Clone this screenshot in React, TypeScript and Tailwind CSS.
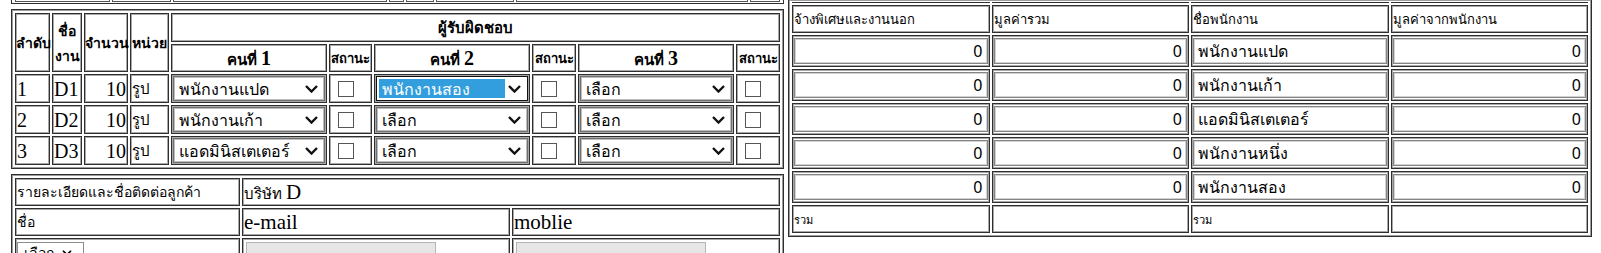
import { ChevronDown } from "lucide-react";

const td = "border border-[#2f2f2f] shadow-[inset_0_0_0_1px_#a8a8a8] p-px align-middle";
const th = "border border-[#2f2f2f] shadow-[inset_0_0_0_1px_#a8a8a8] p-0 align-middle font-bold leading-none";
const tbl =
  "border-separate border-spacing-[2px] border border-[#2f2f2f] p-px shadow-[inset_0_0_0_1px_#9c9c9c] table-fixed";
const sans = "font-['Noto_Sans','DejaVu_Sans',sans-serif]";
const serif = "font-['Liberation_Serif','Noto_Serif',serif]";

function Chevron() {
  return (
    <svg width="13" height="8" viewBox="0 0 13 8" className="shrink-0">
      <polyline points="1,1 6.5,6.5 12,1" fill="none" stroke="#111" strokeWidth="2.4" />
    </svg>
  );
}

function FakeSelect({ label, focused = false }: { label: string; focused?: boolean }) {
  return (
    <div
      className={`flex h-[25px] w-full items-center justify-between bg-white pr-[6px] ${sans} text-[16px] leading-none text-black ${
        focused
          ? "border border-[#111] pl-[2px]"
          : "border border-[#707070] pl-[5px] shadow-[inset_0_0_0_1px_#bdbdbd]"
      }`}
    >
      {focused ? (
        <span className="flex h-[19px] w-[126px] items-center bg-[#339ede] pl-[3px] text-white">{label}</span>
      ) : (
        <span>{label}</span>
      )}
      <Chevron />
    </div>
  );
}

function Check() {
  return <span className="ml-[7px] block h-[16px] w-[16px] border border-[#555] bg-white" />;
}

function NumInput({ value, left = false }: { value: string; left?: boolean }) {
  return (
    <input
      readOnly
      value={value}
      className={`block h-[26px] w-full border border-[#858585] bg-white shadow-[inset_0_0_0_1px_#d2d2d2] ${sans} text-[16px] text-black outline-none ${
        left ? "pl-[4px] text-left" : "pr-[4px] text-right"
      }`}
    />
  );
}

const rows = [
  { no: "1", job: "D1", qty: "10", p1: "พนักงานแปด", p2: "พนักงานสอง", p3: "เลือก", focus: true },
  { no: "2", job: "D2", qty: "10", p1: "พนักงานเก้า", p2: "เลือก", p3: "เลือก", focus: false },
  { no: "3", job: "D3", qty: "10", p1: "แอดมินิสเตเตอร์", p2: "เลือก", p3: "เลือก", focus: false },
];

const staff = ["พนักงานแปด", "พนักงานเก้า", "แอดมินิสเตเตอร์", "พนักงานหนึ่ง", "พนักงานสอง"];

export default function App() {
  return (
    <div className="flex h-[253px] items-start gap-[4px] overflow-hidden bg-white pl-[11px] text-black">
      {/* left column */}
      <div className="w-[773px]">
        {/* bottom edge of the table above (page is scrolled) */}
        <div className="flex h-[4px] w-[773px] gap-[2px] border-x border-b border-[#2f2f2f] px-[3px]">
          <div className="h-[2px] w-[95px] border border-t-0 border-[#555]" />
          <div className="h-[2px] w-[59px] border border-t-0 border-[#555]" />
          <div className="h-[2px] w-[214px] border border-t-0 border-[#555]" />
          <div className="h-[2px] w-[15px] border border-t-0 border-[#555]" />
          <div className="h-[2px] w-[28px] border border-t-0 border-[#555]" />
          <div className="h-[2px] w-[78px] border border-t-0 border-[#555]" />
          <div className="h-[2px] w-[232px] border border-t-0 border-[#555]" />
          <div className="h-[2px] w-[30px] border border-t-0 border-[#555]" />
        </div>

        {/* job table */}
        <table className={`${tbl} mt-[5px] w-[773px]`}>
          <colgroup>
            <col className="w-[35px]" />
            <col className="w-[30px]" />
            <col className="w-[44px]" />
            <col className="w-[39px]" />
            <col className="w-[156px]" />
            <col className="w-[43px]" />
            <col className="w-[156px]" />
            <col className="w-[44px]" />
            <col className="w-[156px]" />
            <col className="w-[44px]" />
          </colgroup>
          <thead className={`${sans} text-[14px]`}>
            <tr>
              <th rowSpan={2} className={`${th} text-left`}>ลำดับ</th>
              <th rowSpan={2} className={th}>
                <div className="leading-[25px]">ชื่อ<br />งาน</div>
              </th>
              <th rowSpan={2} className={th}>จำนวน</th>
              <th rowSpan={2} className={th}>หน่วย</th>
              <th colSpan={6} className={`${th} h-[29px] text-[15px]`}>ผู้รับผิดชอบ</th>
            </tr>
            <tr>
              <th className={`${th} h-[28px] text-[15px]`}>คนที่ <span className={`${serif} text-[20px]`}>1</span></th>
              <th className={`${th} text-[13px]`}>สถานะ</th>
              <th className={`${th} text-[15px]`}>คนที่ <span className={`${serif} text-[20px]`}>2</span></th>
              <th className={`${th} text-[13px]`}>สถานะ</th>
              <th className={`${th} text-[15px]`}>คนที่ <span className={`${serif} text-[20px]`}>3</span></th>
              <th className={`${th} text-[13px]`}>สถานะ</th>
            </tr>
          </thead>
          <tbody>
            {rows.map((r) => (
              <tr key={r.no}>
                <td className={`${td} h-[29px] ${serif} text-[20px] leading-none`}>{r.no}</td>
                <td className={`${td} ${serif} text-[20px] leading-none`}>{r.job}</td>
                <td className={`${td} ${serif} text-right text-[20px] leading-none`}>{r.qty}</td>
                <td className={`${td} ${sans} text-[15px] leading-none`}>รูป</td>
                <td className={td}><FakeSelect label={r.p1} /></td>
                <td className={td}><Check /></td>
                <td className={td}><FakeSelect label={r.p2} focused={r.focus} /></td>
                <td className={td}><Check /></td>
                <td className={td}><FakeSelect label={r.p3} /></td>
                <td className={td}><Check /></td>
              </tr>
            ))}
          </tbody>
        </table>

        {/* customer table */}
        <table className={`${tbl} mt-[5px] w-[773px]`}>
          <colgroup>
            <col className="w-[225px]" />
            <col className="w-[268px]" />
            <col className="w-[268px]" />
          </colgroup>
          <tbody>
            <tr>
              <td className={`${td} h-[28px] ${sans} text-[14px] leading-none`}>รายละเอียดและชื่อติดต่อลูกค้า</td>
              <td colSpan={2} className={`${td} leading-none`}>
                <span className={`${sans} text-[15px]`}>บริษัท </span>
                <span className={`${serif} text-[21px]`}>D</span>
              </td>
            </tr>
            <tr>
              <td className={`${td} h-[28px] ${sans} text-[14px] leading-none`}>ชื่อ</td>
              <td className={`${td} ${serif} text-[21px] leading-none`}>e-mail</td>
              <td className={`${td} ${serif} text-[21px] leading-none`}>moblie</td>
            </tr>
            <tr>
              <td className={`${td} h-[28px] align-top`}>
                <div className={`mt-[2px] flex h-[22px] w-[67px] items-center gap-[6px] border border-[#8c8c8c] bg-white pl-[6px] ${sans} text-[14px] leading-none`}>
                  เลือก
                  <ChevronDown size={14} strokeWidth={3} />
                </div>
              </td>
              <td className={`${td} align-top`}>
                <div className="ml-[2px] mt-[2px] h-[22px] w-[190px] border border-[#b5b5b5] bg-[#e6e6e6]" />
              </td>
              <td className={`${td} align-top`}>
                <div className="ml-[2px] mt-[2px] h-[22px] w-[190px] border border-[#b5b5b5] bg-[#e6e6e6]" />
              </td>
            </tr>
          </tbody>
        </table>
      </div>

      {/* right column: cost table */}
      <table className={`${tbl} w-[804px] border-t-0 pt-0`}>
        <colgroup>
          <col className="w-1/4" />
          <col className="w-1/4" />
          <col className="w-1/4" />
          <col className="w-1/4" />
        </colgroup>
        <tbody className={`${sans} text-[13px] leading-none`}>
          <tr>
            <td className="h-px border border-t-0 border-[#2f2f2f] p-0" />
            <td className="h-px border border-t-0 border-[#2f2f2f] p-0" />
            <td className="h-px border border-t-0 border-[#2f2f2f] p-0" />
            <td className="h-px border border-t-0 border-[#2f2f2f] p-0" />
          </tr>
          <tr>
            <td className={`${td} h-[28px]`}>จ้างพิเศษและงานนอก</td>
            <td className={td}>มูลค่ารวม</td>
            <td className={td}>ชื่อพนักงาน</td>
            <td className={td}>มูลค่าจากพนักงาน</td>
          </tr>
          {staff.map((name) => (
            <tr key={name}>
              <td className={`${td} h-[32px] p-[2px]`}><NumInput value="0" /></td>
              <td className={`${td} p-[2px]`}><NumInput value="0" /></td>
              <td className={`${td} p-[2px]`}><NumInput value={name} left /></td>
              <td className={`${td} p-[2px]`}><NumInput value="0" /></td>
            </tr>
          ))}
          <tr>
            <td className={`${td} h-[28px] text-[11px]`}>รวม</td>
            <td className={td} />
            <td className={`${td} text-[11px]`}>รวม</td>
            <td className={td} />
          </tr>
        </tbody>
      </table>
    </div>
  );
}
